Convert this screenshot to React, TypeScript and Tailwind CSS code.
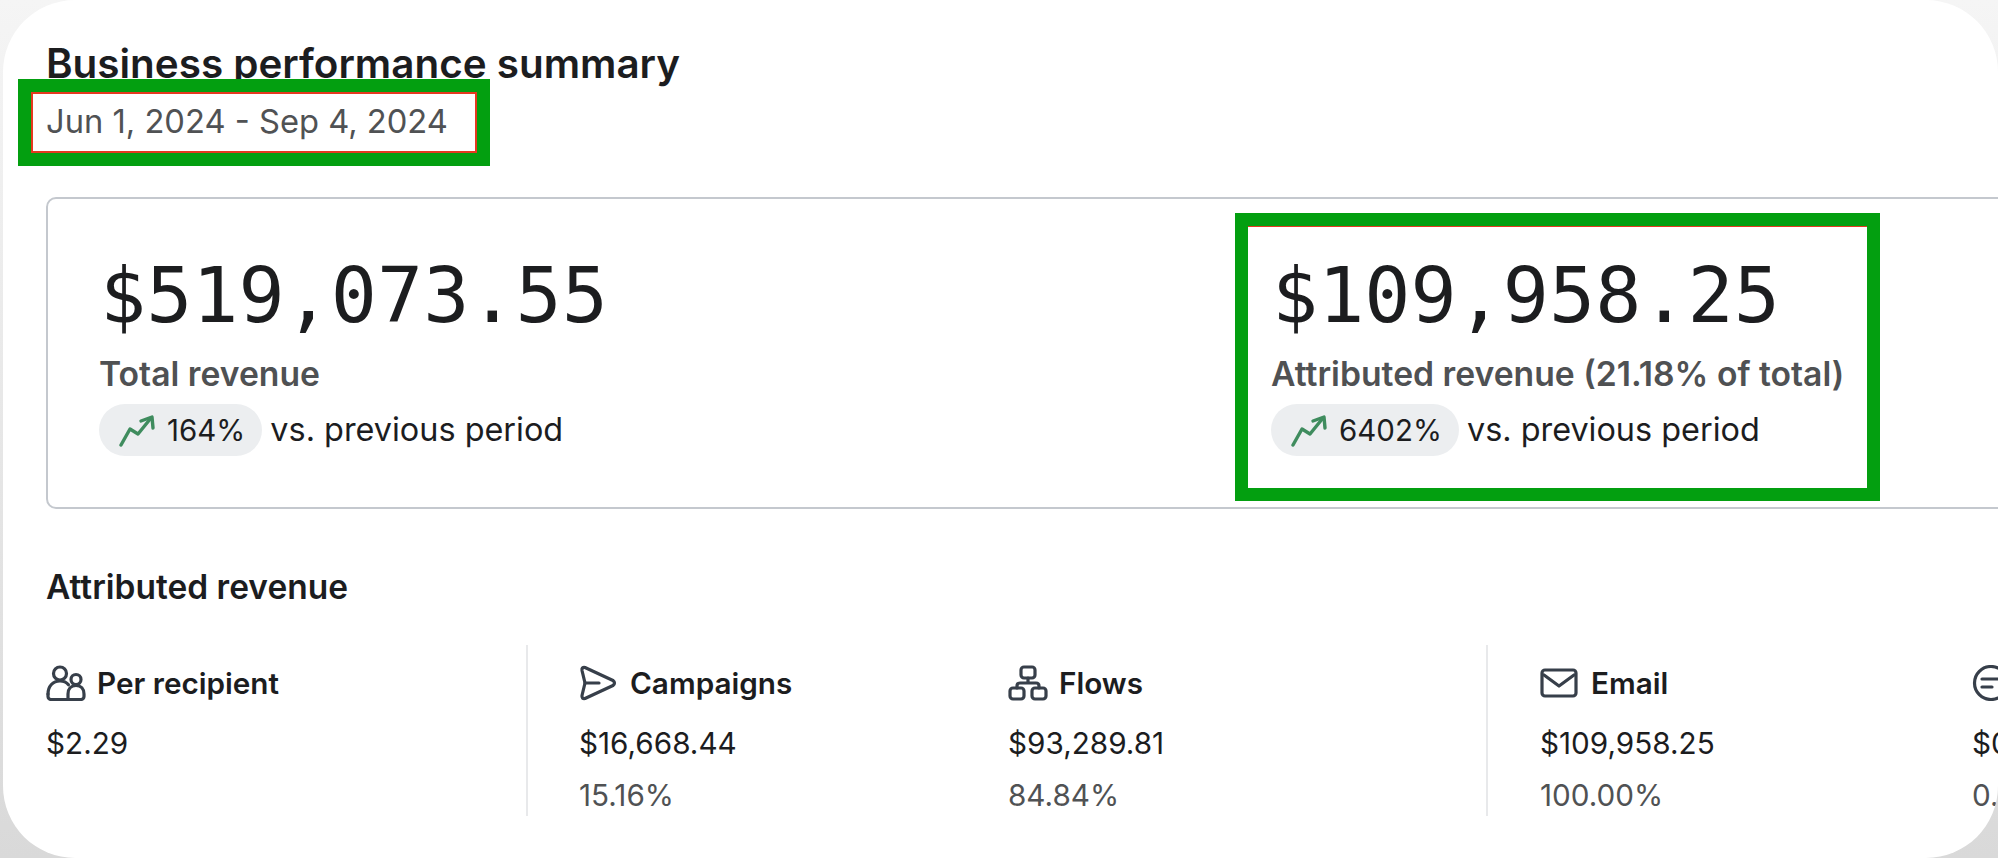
const font = "font-['Inter','Noto_Sans',sans-serif]"

function TrendIcon() {
  return (
    <svg width="36" height="33" viewBox="0 0 36 33" fill="none" stroke="#3f8c5e" strokeWidth="3.4" strokeLinecap="round" strokeLinejoin="round">
      <path d="M2 31 L11 15 L19 20 L32 4" />
      <path d="M22 7 L33 3 L34 14" />
    </svg>
  )
}

function UsersIcon() {
  return (
    <svg width="40" height="36" viewBox="0 0 40 36" fill="none" stroke="#373f4a" strokeWidth="3.2" strokeLinecap="round" strokeLinejoin="round">
      <circle cx="14" cy="8.5" r="6.5" />
      <circle cx="30" cy="14.5" r="5" />
      <path d="M2 29c0-8 5-13 12-13 3.5 0 6.5 1.3 8.5 3.8" />
      <path d="M2 29v2.5a3 3 0 0 0 3 3h30a3 3 0 0 0 3-3V29c0-5-3-8.5-8-8.5s-8 3.500-8 8.500v5.500" />
    </svg>
  )
}

function SendIcon() {
  return (
    <svg className="mr-[2px]" width="38" height="36" viewBox="0 0 38 36" fill="none" stroke="#373f4a" strokeWidth="3.2" strokeLinecap="round" strokeLinejoin="round">
      <path d="M6 2.500 Q2.500 2 3 5.500 L6 18 L3 30.500 Q2.500 34 6 33.500 L34 20.500 Q37 18 34 15.500 Z" />
      <path d="M6 18 H20" />
    </svg>
  )
}

function FlowIcon() {
  return (
    <svg width="40" height="36" viewBox="0 0 40 36" fill="none" stroke="#373f4a" strokeWidth="3.2" strokeLinecap="round" strokeLinejoin="round">
      <rect x="13" y="2" width="14" height="11" rx="3" />
      <rect x="2" y="23" width="14" height="11" rx="3" />
      <rect x="24" y="23" width="14" height="11" rx="3" />
      <path d="M20 13v5M9 23v-2q0-3 3-3h16q3 0 3 3v2" />
    </svg>
  )
}

function MailIcon() {
  return (
    <svg className="mr-[2px]" width="38" height="30" viewBox="0 0 38 30" fill="none" stroke="#373f4a" strokeWidth="3.2" strokeLinecap="round" strokeLinejoin="round">
      <rect x="2" y="2" width="34" height="26" rx="3" />
      <path d="M4 7 L19 18 L34 7" />
    </svg>
  )
}

function SmsIcon() {
  return (
    <svg width="38" height="36" viewBox="0 0 38 36" fill="none" stroke="#373f4a" strokeWidth="3.2" strokeLinecap="round" strokeLinejoin="round">
      <circle cx="19" cy="18" r="16.500" />
      <path d="M10 14h18M10 22h10" />
    </svg>
  )
}

function Stat({ amount, label, change, className }: { amount: string; label: string; change: string; className: string }) {
  return (
    <div className={className}>
      <div className="font-['DejaVu_Sans_Mono',monospace] text-[76.7px] leading-[76px] text-[#1c1d1f] pl-[1px]">{amount}</div>
      <div className="mt-[20px] text-[33.7px] leading-[40px] font-semibold text-[#4f5153] whitespace-nowrap">{label}</div>
      <div className="mt-[10px] flex items-center gap-[8px]">
        <div className="flex h-[52px] items-center gap-[12px] rounded-full bg-[#eceef0] pl-[20px] pr-[17px] text-[29.5px] text-[#1c1d1f]">
          <TrendIcon />
          {change}
        </div>
        <span className="text-[32.4px] text-[#1c1d1f]">vs. previous period</span>
      </div>
    </div>
  )
}

function Metric({ icon, name, value, share, className }: { icon: React.ReactNode; name: string; value: string; share?: string; className: string }) {
  return (
    <div className={className}>
      <div className="flex h-[36px] items-center gap-[11px] text-[29.7px] font-semibold text-[#1c1d1f] whitespace-nowrap">
        {icon}
        {name}
      </div>
      <div className="mt-[24px] text-[29.7px] leading-[36px] text-[#1c1d1f]">{value}</div>
      {share && <div className="mt-[16px] text-[29.7px] leading-[36px] text-[#505254]">{share}</div>}
    </div>
  )
}

export default function App() {
  return (
    <div className="h-[858px] w-[1998px] overflow-hidden bg-gradient-to-b from-[#f5f5f5] to-[#d9d9d9]">
      <main className={`${font} relative ml-[3px] h-[858px] overflow-hidden rounded-[72px] bg-white pl-[43px] pt-[41px]`}>
        <h1 className="text-[40.4px] leading-[46px] font-semibold text-[#1c1d1f]">Business performance summary</h1>
        <p className="mt-[14px] text-[32.7px] leading-[40px] text-[#505254]">Jun 1, 2024 - Sep 4, 2024</p>

        {/* annotation boxes */}
        <div className="absolute left-[15px] top-[79px] h-[87px] w-[472px] border-[13px] border-[#039f10]">
          <div className="h-full w-full border-2 border-[#e5391f]" />
        </div>
        <div className="absolute left-[1232px] top-[213px] h-[288px] w-[645px] border-[13px] border-[#039f10]">
          <div className="h-[1px] w-full bg-[#e5391f]" />
        </div>

        <section className="mt-[56px] flex h-[312px] w-[2100px] rounded-[10px] border-2 border-[#c4c8ce] pl-[51px] pt-[59px]">
          <Stat className="w-[1172px]" amount="$519,073.55" label="Total revenue" change="164%" />
          <Stat className="" amount="$109,958.25" label="Attributed revenue (21.18% of total)" change="6402%" />
        </section>

        <h2 className="mt-[58px] text-[33.5px] leading-[40px] font-semibold text-[#1c1d1f]">Attributed revenue</h2>

        <div className="mt-[38px] flex h-[171px] w-[2100px] items-start">
          <Metric className="w-[480px] pt-[20px]" icon={<UsersIcon />} name="Per recipient" value="$2.29" />
          <div className="flex h-full w-[962px] border-x-2 border-[#e8e9eb] pl-[51px]">
            <Metric className="w-[429px] pt-[20px]" icon={<SendIcon />} name="Campaigns" value="$16,668.44" share="15.16%" />
            <Metric className="pt-[20px]" icon={<FlowIcon />} name="Flows" value="$93,289.81" share="84.84%" />
          </div>
          <div className="flex pl-[52px]">
            <Metric className="w-[432px] pt-[20px]" icon={<MailIcon />} name="Email" value="$109,958.25" share="100.00%" />
            <Metric className="pt-[20px]" icon={<SmsIcon />} name="SMS" value="$0.00" share="0.00%" />
          </div>
        </div>
      </main>
    </div>
  )
}
